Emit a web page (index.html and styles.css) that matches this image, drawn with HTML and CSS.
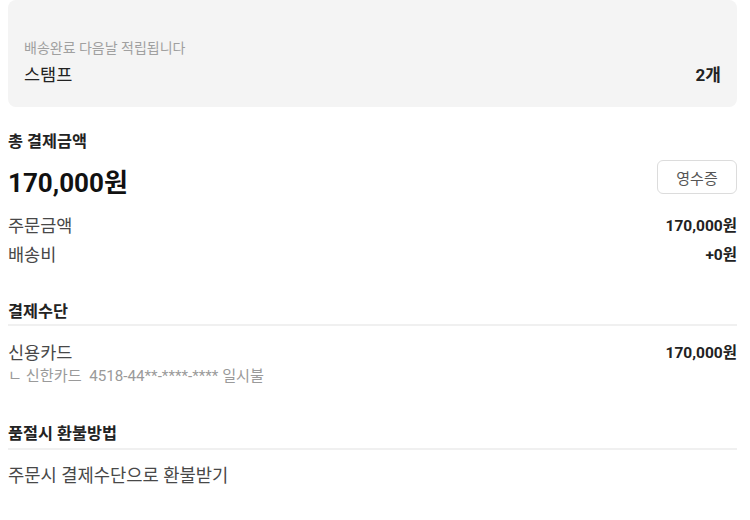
FILE: index.html
```html
<!DOCTYPE html>
<html lang="ko">
<head>
<meta charset="utf-8">
<link rel="stylesheet" href="styles.css">
</head>
<body>
<div class="page">
  <div class="stamp-card">
    <div class="stamp-note">배송완료 다음날 적립됩니다</div>
    <div class="stamp-row">
      <span class="stamp-label">스탬프</span>
      <span class="stamp-count">2개</span>
    </div>
  </div>

  <section class="total">
    <h3 class="total-title">총 결제금액</h3>
    <div class="total-row">
      <span class="total-amount">170,000원</span>
      <button class="receipt-btn">영수증</button>
    </div>
    <div class="line-row first">
      <span class="line-label">주문금액</span>
      <span class="line-value">170,000원</span>
    </div>
    <div class="line-row">
      <span class="line-label">배송비</span>
      <span class="line-value">+0원</span>
    </div>
  </section>

  <section class="pay">
    <h3 class="section-title">결제수단</h3>
    <div class="line-row pay-row">
      <span class="line-label">신용카드</span>
      <span class="line-value">170,000원</span>
    </div>
    <div class="pay-detail">ㄴ 신한카드&nbsp;&nbsp;4518-44**-****-**** 일시불</div>
  </section>

  <section class="refund">
    <h3 class="section-title">품절시 환불방법</h3>
    <div class="refund-text">주문시 결제수단으로 환불받기</div>
  </section>
</div>
</body>
</html>
```

FILE: styles.css
```css
* { box-sizing: border-box; }
html, body { margin: 0; padding: 0; background: #fff; }
body {
  font-family: Roboto, "Noto Sans CJK KR", "Noto Sans", sans-serif;
  color: #222;
}
.page {
  padding: 0 13px 0 8px;
}
.stamp-card {
  background: #f4f4f4;
  border-radius: 8px;
  padding: 38px 16px 20px 16px;
}
.stamp-note {
  font-size: 14px;
  line-height: 20px;
  color: #a0a0a0;
}
.stamp-row {
  margin-top: 5px;
  display: flex;
  justify-content: space-between;
  align-items: center;
  line-height: 24px;
}
.stamp-label { font-size: 17.5px; color: #222; }
.stamp-count { font-size: 17px; font-weight: 700; color: #222; }

.total { margin-top: 24px; }
.total-title, .section-title {
  margin: 0;
  font-size: 16.3px;
  line-height: 22px;
  font-weight: 700;
  color: #222;
}
.total-row {
  margin-top: 7px;
  display: flex;
  justify-content: space-between;
  align-items: flex-start;
}
.total-amount {
  margin-top: 6px;
  font-size: 26px;
  line-height: 34px;
  font-weight: 700;
  color: #111;
}
.receipt-btn {
  width: 80px;
  height: 34px;
  border: 1px solid #dcdcdc;
  border-radius: 6px;
  background: #fff;
  font-family: inherit;
  font-size: 15px;
  color: #555;
  padding: 0;
}
.line-row {
  display: flex;
  justify-content: space-between;
  align-items: center;
  line-height: 29px;
}
.line-row.first { margin-top: 12px; }
.line-label { font-size: 17.5px; color: #484848; }
.line-value { font-size: 15.5px; font-weight: 700; color: #222; }

.pay { margin-top: 31px; }
.section-title {
  padding-bottom: 1px;
  border-bottom: 2px solid #f0f0f0;
}
.pay-row { margin-top: 15px; line-height: 24px; }
.pay-detail {
  font-size: 15.2px;
  line-height: 22px;
  color: #9a9a9a;
}
.refund { margin-top: 36px; }
.refund .section-title { padding-bottom: 3px; }
.refund-text {
  margin-top: 13px;
  font-size: 17.7px;
  line-height: 26px;
  color: #484848;
}
```
